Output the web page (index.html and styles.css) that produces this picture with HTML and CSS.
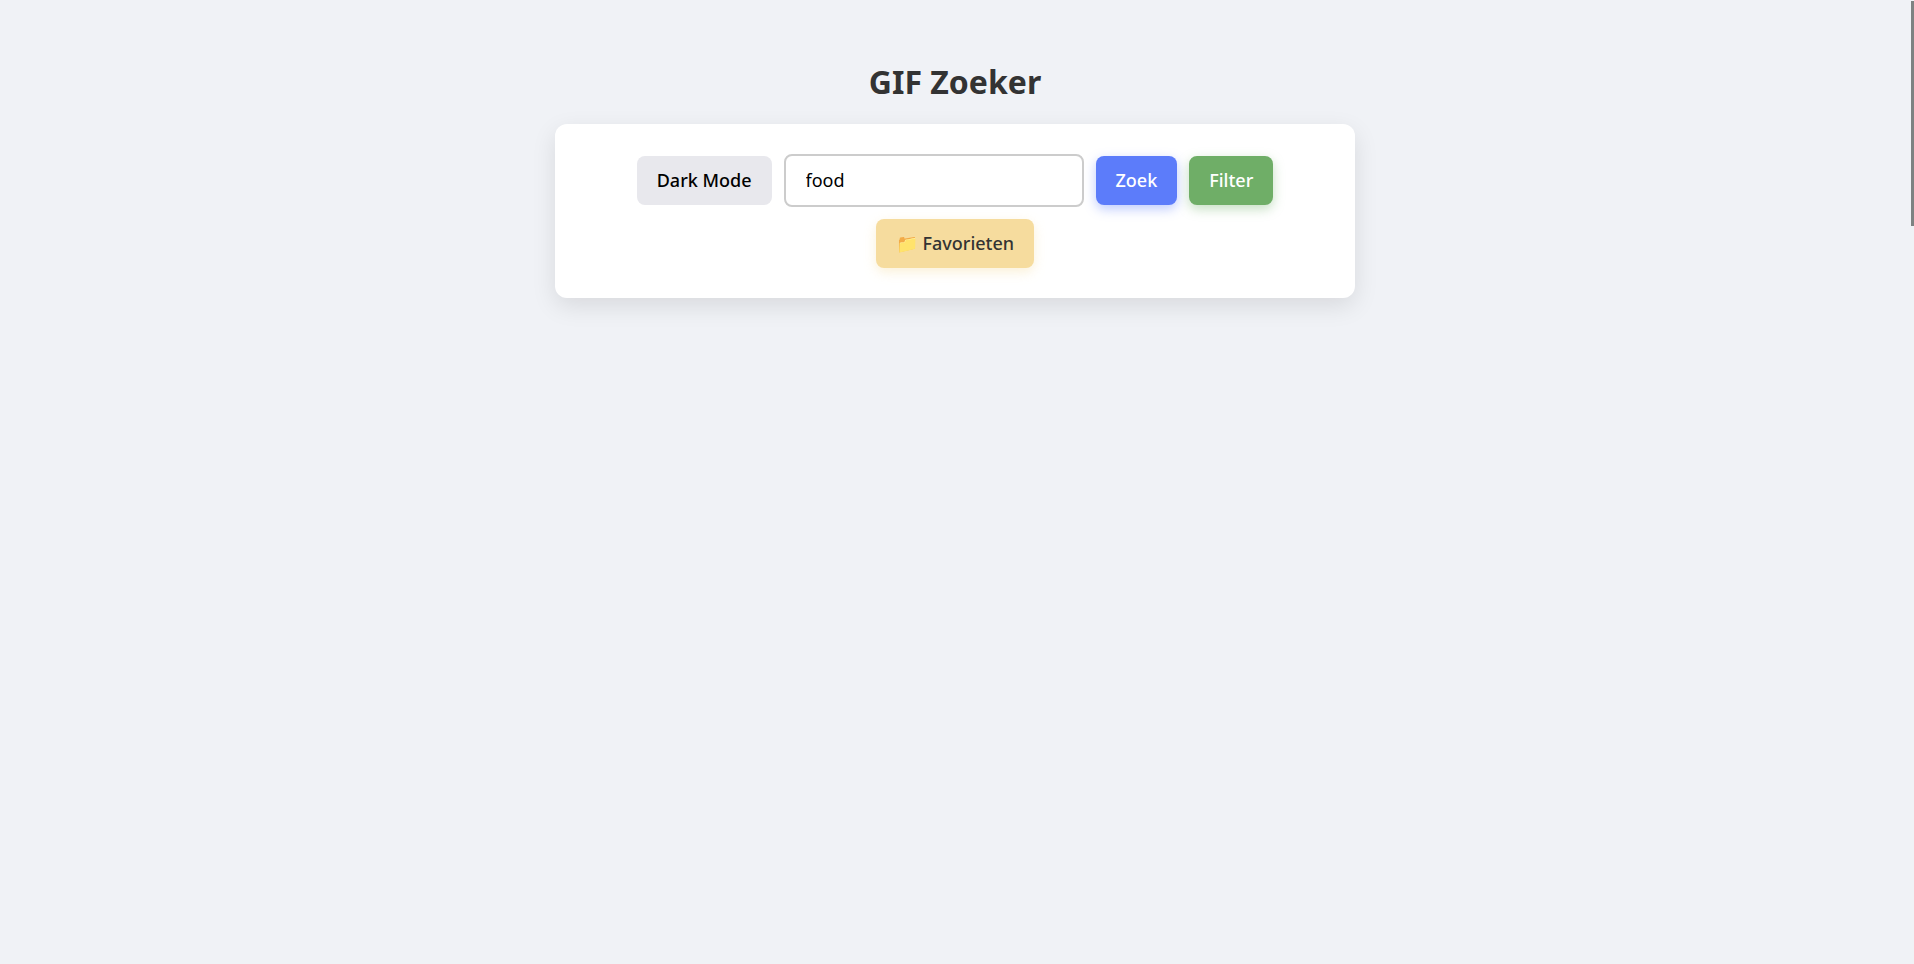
FILE: index.html
```html
<!DOCTYPE html>
<html lang="nl">
<head>
<meta charset="utf-8">
<title>GIF Zoeker</title>
<link rel="stylesheet" href="styles.css">
</head>
<body>
<div class="page">
<h1 class="title">GIF Zoeker</h1>
<form class="search-card">
<button type="button" class="btn btn-mode">Dark Mode</button>
<input class="search-input" type="text" value="food" aria-label="Zoekterm">
<button type="button" class="btn btn-search">Zoek</button>
<button type="button" class="btn btn-filter">Filter</button>
<button type="button" class="btn btn-favorites">📁 Favorieten</button>
</form>
</div>
<div class="scroll-thumb"></div>
</body>
</html>
```
FILE: styles.css
```css
* { box-sizing: border-box; }
body {
  margin: 0;
  background: #f0f2f6;
  color: #333;
  font-family: "Noto Sans", sans-serif;
}
.page {
  display: flex;
  flex-direction: column;
  align-items: center;
  padding: 60px 20px;
  margin-right: 4px;
}
.title {
  margin: 0 0 20px;
  font-size: 32px;
  line-height: 44px;
  font-weight: 700;
}
.search-card {
  display: flex;
  flex-wrap: wrap;
  justify-content: center;
  align-items: center;
  gap: 12px;
  width: 100%;
  max-width: 800px;
  padding: 30px;
  background: #fff;
  border-radius: 12px;
  box-shadow: 0 8px 24px rgba(0, 0, 0, 0.1);
}
.btn {
  padding: 12px 20px;
  border: 0;
  border-radius: 8px;
  font: 550 18px/25px "Noto Sans", sans-serif;
}
.btn-mode { background: #e8e8ed; color: #000; }
.btn-search { background: #5c7cfa; color: #fff; box-shadow: 0 4px 12px rgba(92, 124, 250, 0.4); }
.btn-filter { background: #6fae67; color: #fff; box-shadow: 0 4px 12px rgba(111, 174, 103, 0.4); }
.btn-favorites { background: #f6dc9e; color: #333; box-shadow: 0 4px 12px rgba(246, 220, 158, 0.4); }
.search-input {
  width: 300px;
  padding: 12px 20px;
  border: 2px solid #ccc;
  border-radius: 8px;
  background: #fff;
  color: #000;
  font: 400 18px/25px "Noto Sans", sans-serif;
}
.scroll-thumb {
  position: fixed;
  top: 1px;
  right: 0;
  width: 3px;
  height: 225px;
  background: #7e8282;
}
```
